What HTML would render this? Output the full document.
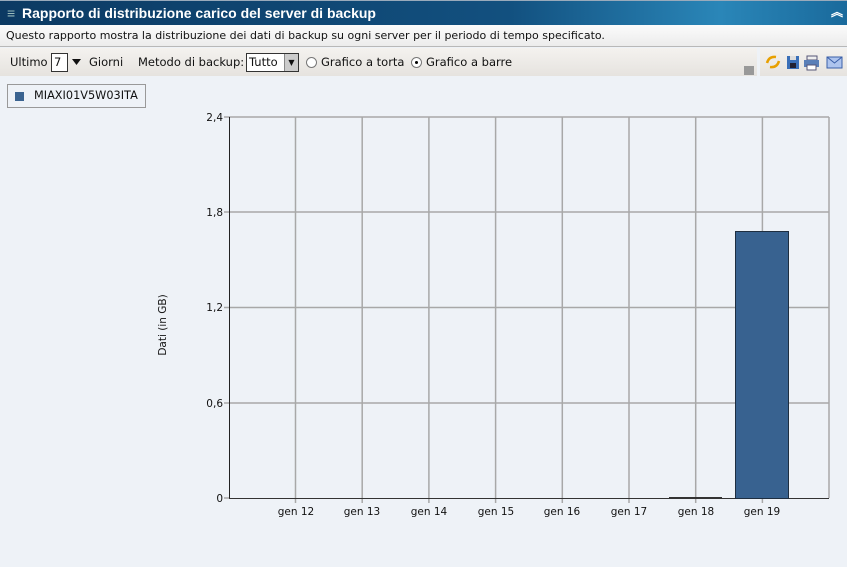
<!DOCTYPE html>
<html><head><meta charset="utf-8"><style>
*{margin:0;padding:0;box-sizing:border-box}
body{width:847px;height:567px;overflow:hidden;background:#eef2f7;font-family:"DejaVu Sans","Liberation Sans",sans-serif;font-size:11px;color:#111;position:relative}
.title{position:absolute;left:0;top:0;width:847px;height:25px;background:linear-gradient(90deg,#0c3a63 0%,#12507f 60%,#2a86b8 85%,#1a6a9c 100%);border-top:1px solid #9ab;color:#fff;font-weight:bold;font-size:14px;line-height:24px;padding-left:22px;font-family:"Liberation Sans",sans-serif}
.desc{position:absolute;left:0;top:25px;width:847px;height:22px;background:linear-gradient(#fbfbfb,#ececec);border-bottom:1px solid #b8b8b8;line-height:22px;padding-left:6px}
.tb{position:absolute;left:0;top:48px;width:757px;height:28px;background:linear-gradient(#f4f2ef,#e6e3df)}
.tb span.t{position:absolute;top:0;line-height:29px;font-size:11.5px;white-space:nowrap}
.tb2{position:absolute;left:760px;top:48px;width:87px;height:28px;background:linear-gradient(#f4f2ef,#e6e3df)}
.box{position:absolute;top:5px;border:1px solid #333;background:#fff;height:19px;line-height:17px;padding-left:2px;font-size:11.5px}
.legend{position:absolute;left:7px;top:84px;width:139px;height:24px;border:1px solid #999;line-height:22px;padding-left:26px;font-size:11.3px}
.legend i{position:absolute;left:7px;top:7px;width:9px;height:9px;background:#3a6390}
.rad{position:absolute;top:9px;width:11px;height:11px;border:1px solid #777;border-radius:50%;background:#fff}
</style></head><body>
<div class="title"><span style="position:absolute;left:7px;top:0;font-weight:normal;color:#9bb">≡</span>Rapporto di distribuzione carico del server di backup<span style="position:absolute;right:4px;top:-1px;font-size:12px">︽</span></div>
<div class="desc">Questo rapporto mostra la distribuzione dei dati di backup su ogni server per il periodo di tempo specificato.</div>
<div class="tb">
<span class="t" style="left:10px">Ultimo</span>
<span class="box" style="left:51px;width:17px">7</span>
<svg style="position:absolute;left:72px;top:11px" width="9" height="6"><path d="M0 0h9l-4.5 6z" fill="#111"/></svg>
<span class="t" style="left:89px">Giorni</span>
<span class="t" style="left:138px">Metodo di backup:</span>
<span class="box" style="left:246px;width:53px">Tutto<span style="position:absolute;right:0;top:0;width:14px;height:17px;background:#ccc;border-left:1px solid #888;font-size:8px;text-align:center">▼</span></span>
<span class="rad" style="left:306px"></span>
<span class="t" style="left:321px">Grafico a torta</span>
<span class="rad" style="left:411px"><span style="position:absolute;left:3px;top:3px;width:3px;height:3px;background:#000;border-radius:50%"></span></span>
<span class="t" style="left:426px">Grafico a barre</span>
<span style="position:absolute;left:744px;top:18px;width:10px;height:9px;background:#999"></span></div>
<div class="tb2">
<svg width="87" height="28" style="position:absolute;left:0;top:0">
<path d="M7 15 q2-7 9-6 M10 19 q7 1 9-6" stroke="#e8a000" stroke-width="2.5" fill="none"/>
<rect x="27" y="8" width="12" height="13" fill="#3a6fb8"/><rect x="30" y="8" width="6" height="4" fill="#ddd"/><rect x="30" y="15" width="6" height="5" fill="#223"/>
<rect x="47" y="8" width="10" height="4" fill="#eee" stroke="#557"/><rect x="44" y="12" width="15" height="7" fill="#5a7fb8"/><rect x="47" y="17" width="9" height="5" fill="#fff" stroke="#557"/>
<rect x="67" y="9" width="15" height="11" fill="#aec4ee" stroke="#3a5fa8"/><path d="M67 9 l7.5 6 l7.5-6" stroke="#3a5fa8" fill="none"/>
</svg></div>
<div class="legend"><i></i>MIAXI01V5W03ITA</div>
<svg width="847" height="567" style="position:absolute;left:0;top:0" font-family="DejaVu Sans,Liberation Sans,sans-serif" font-size="10.5">
<g stroke="#a8a8a8" stroke-width="1.5">
<line x1="229" y1="117" x2="829" y2="117"/><line x1="229" y1="212" x2="829" y2="212"/><line x1="229" y1="307.5" x2="829" y2="307.5"/><line x1="229" y1="403" x2="829" y2="403"/>
<line x1="829" y1="117" x2="829" y2="498"/>
<line x1="295.5" y1="117" x2="295.5" y2="503"/><line x1="362.2" y1="117" x2="362.2" y2="503"/><line x1="428.9" y1="117" x2="428.9" y2="503"/><line x1="495.6" y1="117" x2="495.6" y2="503"/><line x1="562.3" y1="117" x2="562.3" y2="503"/><line x1="629" y1="117" x2="629" y2="503"/><line x1="695.7" y1="117" x2="695.7" y2="503"/><line x1="762.4" y1="117" x2="762.4" y2="503"/>
<line x1="224" y1="117" x2="229" y2="117"/><line x1="224" y1="212" x2="229" y2="212"/><line x1="224" y1="307.5" x2="229" y2="307.5"/><line x1="224" y1="403" x2="229" y2="403"/><line x1="224" y1="498" x2="229" y2="498"/>
</g>
<line x1="229.5" y1="117" x2="229.5" y2="498" stroke="#222"/>
<line x1="229" y1="498.5" x2="829" y2="498.5" stroke="#333"/>
<line x1="669" y1="497.5" x2="722" y2="497.5" stroke="#333"/>
<rect x="735.5" y="231.5" width="53" height="267" fill="#386290" stroke="#1e2e40"/>
<g text-anchor="end" fill="#111"><text x="223" y="121">2,4</text><text x="223" y="216">1,8</text><text x="223" y="311">1,2</text><text x="223" y="407">0,6</text><text x="223" y="502">0</text></g>
<g text-anchor="middle" fill="#111"><text x="296" y="515">gen 12</text><text x="362" y="515">gen 13</text><text x="429" y="515">gen 14</text><text x="496" y="515">gen 15</text><text x="562" y="515">gen 16</text><text x="629" y="515">gen 17</text><text x="696" y="515">gen 18</text><text x="762" y="515">gen 19</text></g>
<text x="166" y="325" transform="rotate(-90 166 325)" text-anchor="middle" fill="#111">Dati (in GB)</text>
</svg>
</body></html>
